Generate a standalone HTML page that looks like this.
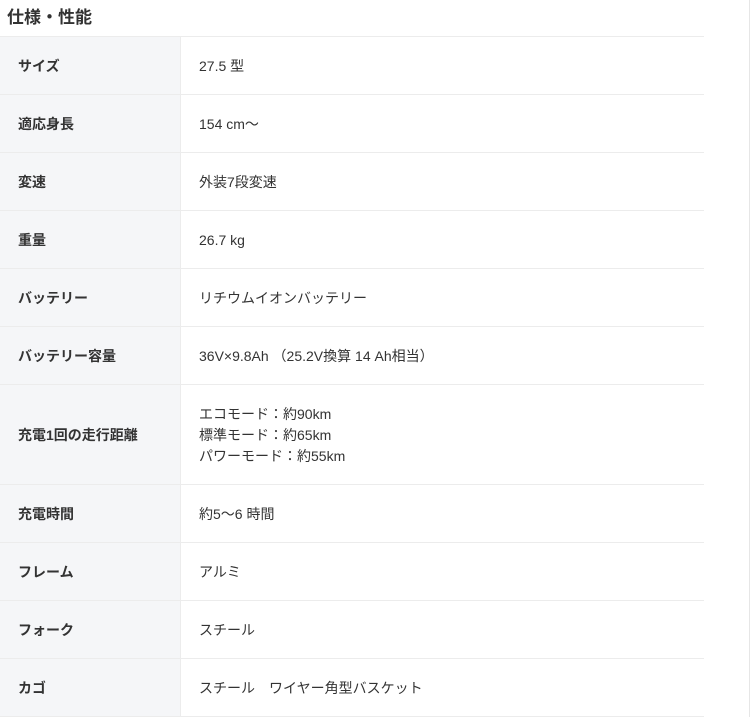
<!DOCTYPE html>
<html><head><meta charset="utf-8"><style>
body{margin:0;background:#fff;font-family:"Liberation Sans","Noto Sans CJK JP",sans-serif;color:#333;width:751px;height:717px;overflow:hidden;position:relative}
h2{margin:0;position:absolute;left:7px;top:7px;font-size:17px;font-weight:bold;line-height:22px;color:#333}
table{position:absolute;left:0;top:36px;width:704px;border-collapse:collapse}
td{border-top:1px solid #ececec;border-bottom:1px solid #ececec;font-size:14px;line-height:21px;padding:2px 0 0 0}
td.k{width:162px;padding-left:18px;background:#f5f6f8;font-weight:bold;border-right:1px solid #ececec}
td.v{padding-left:18px}
tr{height:58px}
.sb{position:absolute;left:749px;top:0;width:1px;height:717px;background:#e6e6e6}
</style></head><body>
<h2>仕様・性能</h2>
<table>
<tr><td class="k">サイズ</td><td class="v">27.5 型</td></tr>
<tr><td class="k">適応身長</td><td class="v">154 cm〜</td></tr>
<tr><td class="k">変速</td><td class="v">外装7段変速</td></tr>
<tr><td class="k">重量</td><td class="v">26.7 kg</td></tr>
<tr><td class="k">バッテリー</td><td class="v">リチウムイオンバッテリー</td></tr>
<tr><td class="k">バッテリー容量</td><td class="v">36V×9.8Ah （25.2V換算 14 Ah相当）</td></tr>
<tr style="height:100px"><td class="k">充電1回の走行距離</td><td class="v">エコモード：約90km<br>標準モード：約65km<br>パワーモード：約55km</td></tr>
<tr><td class="k">充電時間</td><td class="v">約5〜6 時間</td></tr>
<tr><td class="k">フレーム</td><td class="v">アルミ</td></tr>
<tr><td class="k">フォーク</td><td class="v">スチール</td></tr>
<tr><td class="k">カゴ</td><td class="v">スチール　ワイヤー角型バスケット</td></tr>
</table>
<div class="sb"></div>
</body></html>
